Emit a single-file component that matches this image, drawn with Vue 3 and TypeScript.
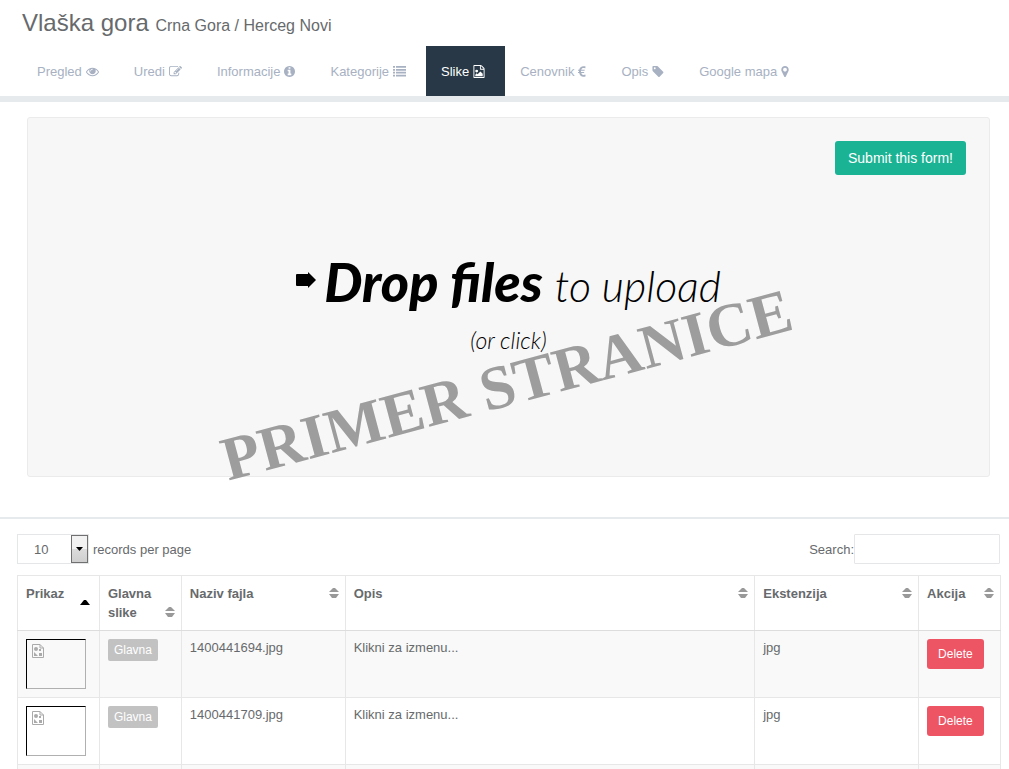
<script setup lang="ts">
import { ref } from 'vue'

interface Icon {
  box: string
  width: number
  path: string
}

interface Tab {
  label: string
  icon: Icon
}

interface Column {
  label: string
  units: number
  sort: 'asc' | 'both'
}

const tabs: Tab[] = [
  {
    label: 'Pregled',
    icon: {
      box: '0 0 1792 1792',
      width: 13,
      path: 'M1664 960q-152-236-381-353 61 104 61 225 0 185-131.500 316.500t-316.500 131.500-316.500-131.500-131.500-316.500q0-121 61-225-229 117-381 353 133 205 333.500 326.500t434.500 121.500 434.500-121.500 333.500-326.500zm-720-384q0-20-14-34t-34-14q-125 0-214.500 89.500t-89.500 214.500q0 20 14 34t34 14 34-14 14-34q0-86 61-147t147-61q20 0 34-14t14-34zm848 384q0 34-20 69-140 230-376.500 368.500t-499.500 138.500-499.500-139-376.500-368q-20-35-20-69t20-69q140-229 376.500-368t499.500-139 499.500 139 376.500 368q20 35 20 69z'
    }
  },
  {
    label: 'Uredi',
    icon: {
      box: '0 0 1792 1792',
      width: 13,
      path: 'M888 1184l116-116-152-152-116 116v56h96v96h56zm440-720q-16-16-33 1l-350 350q-17 17-1 33t33-1l350-350q17-17 1-33zm80 594v190q0 119-84.500 203.500t-203.500 84.500h-832q-119 0-203.500-84.500t-84.500-203.500v-832q0-119 84.500-203.500t203.500-84.500h832q63 0 117 25 15 7 18 23 3 17-9 29l-49 49q-14 14-32 8-23-6-45-6h-832q-66 0-113 47t-47 113v832q0 66 47 113t113 47h832q66 0 113-47t47-113v-126q0-13 9-22l64-64q15-15 35-7t20 29zm-96-738l288 288-672 672h-288v-288zm444 132l-92 92-288-288 92-92q28-28 68-28t68 28l152 152q28 28 28 68t-28 68z'
    }
  },
  {
    label: 'Informacije',
    icon: {
      box: '128 0 1536 1792',
      width: 11,
      path: 'M1152 1376v-160q0-14-9-23t-23-9h-96v-512q0-14-9-23t-23-9h-320q-14 0-23 9t-9 23v160q0 14 9 23t23 9h96v320h-96q-14 0-23 9t-9 23v160q0 14 9 23t23 9h448q14 0 23-9t9-23zm-128-896v-160q0-14-9-23t-23-9h-192q-14 0-23 9t-9 23v160q0 14 9 23t23 9h192q14 0 23-9t9-23zm640 416q0 209-103 385.500t-279.500 279.500-385.500 103-385.500-103-279.500-279.500-103-385.500 103-385.500 279.500-279.500 385.500-103 385.500 103 279.500 279.500 103 385.500z'
    }
  },
  {
    label: 'Kategorije',
    icon: {
      box: '0 0 13 13',
      width: 13,
      path: 'M0 1h2v1.800H0zM3 1h10v1.800H3zM0 3.900h2v1.800H0zM3 3.900h10v1.800H3zM0 6.800h2v1.800H0zM3 6.800h10v1.800H3zM0 9.700h2v1.800H0zM3 9.700h10v1.800H3z'
    }
  },
  {
    label: 'Slike',
    icon: {
      box: '128 0 1536 1792',
      width: 12,
      path: 'M1596 380q28 28 48 76t20 88v1152q0 40-28 68t-68 28h-1344q-40 0-68-28t-28-68v-1600q0-40 28-68t68-28h896q40 0 88 20t76 48zm-444-244v376h376q-10-29-22-41l-313-313q-12-12-41-22zm384 1528v-1024h-416q-40 0-68-28t-28-68v-416h-768v1536h1280zm-128-448v320h-1024v-192l192-192 128 128 384-384zm-832-192q-80 0-136-56t-56-136 56-136 136-56 136 56 56 136-56 136-136 56z'
    }
  },
  {
    label: 'Cenovnik',
    icon: {
      box: '0 0 8 13',
      width: 8,
      path: 'M7.600 1.600 7.200 3.500C6.700 3.200 6.100 3.100 5.500 3.100 4.400 3.100 3.600 3.700 3.300 4.700H6.800L6.500 5.800H3V6.900H6.300L6 8H3.300C3.600 9.200 4.400 9.900 5.600 9.900 6.200 9.900 6.800 9.800 7.300 9.500L7.700 11.300C7 11.700 6.200 11.800 5.400 11.800 3.200 11.800 1.600 10.400 1.200 8H0V6.900H1V5.800H0V4.700H1.200C1.700 2.600 3.200 1.200 5.400 1.200 6.200 1.200 6.900 1.300 7.600 1.600Z'
    }
  },
  {
    label: 'Opis',
    icon: {
      box: '128 0 1536 1792',
      width: 12,
      path: 'M576 448q0-53-37.500-90.500t-90.500-37.500-90.500 37.500-37.500 90.500 37.500 90.500 90.500 37.500 90.500-37.500 37.500-90.500zm1067 576q0 53-37 90l-491 492q-39 37-91 37-53 0-90-37l-715-716q-38-37-64.500-101t-26.500-117v-416q0-52 38-90t90-38h416q53 0 117 26.500t102 64.500l715 714q37 39 37 91z'
    }
  },
  {
    label: 'Google mapa',
    icon: {
      box: '384 0 1024 1792',
      width: 8,
      path: 'M1152 640q0-106-75-181t-181-75-181 75-75 181 75 181 181 75 181-75 75-181zm256 0q0 109-33 179l-364 774q-16 33-47.500 52t-67.500 19-67.500-19-46.500-52l-365-774q-33-70-33-179 0-212 150-362t362-150 362 150 150 362z'
    }
  }
]

const columns: Column[] = [
  { label: 'Prikaz', units: 1, sort: 'asc' },
  { label: 'Glavna slike', units: 1, sort: 'both' },
  { label: 'Naziv fajla', units: 2, sort: 'both' },
  { label: 'Opis', units: 5, sort: 'both' },
  { label: 'Ekstenzija', units: 2, sort: 'both' },
  { label: 'Akcija', units: 1, sort: 'both' }
]

const files = [
  { name: '1400441694.jpg', ext: 'jpg' },
  { name: '1400441709.jpg', ext: 'jpg' }
]

const activeTab = ref('Slike')
const pageSize = ref('10')
const search = ref('')
</script>

<template>
  <div class="page">
    <header class="heading">
      <h1>Vlaška gora <small>Crna Gora / Herceg Novi</small></h1>
    </header>

    <nav class="tabs">
      <a
        v-for="tab in tabs"
        :key="tab.label"
        href="#"
        class="tab"
        :class="{ active: tab.label === activeTab }"
        @click.prevent="activeTab = tab.label"
      >
        <span>{{ tab.label }}</span>
        <svg :viewBox="tab.icon.box" :width="tab.icon.width" height="13" fill="currentColor" aria-hidden="true">
          <path :d="tab.icon.path" />
        </svg>
      </a>
    </nav>

    <section class="upload">
      <form class="dropzone" @submit.prevent>
        <button type="submit" class="submit">Submit this form!</button>
        <div class="message">
          <p class="drop-line">
            <svg class="arrow" viewBox="0 0 20 16" width="20" height="16" aria-hidden="true">
              <path d="M1 2h11V0l8 8-8 8v-2H1q-1 0-1-1V3q0-1 1-1z" />
            </svg>
            <strong>Drop files</strong>
            <span class="thin">to upload</span>
          </p>
          <p class="click-line">(or click)</p>
        </div>
        <div class="watermark">PRIMER STRANICE</div>
      </form>
    </section>

    <section class="listing">
      <div class="controls">
        <label class="length">
          <span class="select-box">
            <select v-model="pageSize">
              <option>10</option>
            </select>
            <span class="select-arrow">
              <svg viewBox="0 0 7 4" width="7" height="4" aria-hidden="true"><path d="M0 0h7L3.500 4z" /></svg>
            </span>
          </span>
          records per page
        </label>
        <label class="search">Search:<input v-model="search" type="text" /></label>
      </div>

      <table>
        <colgroup>
          <col v-for="c in columns" :key="c.label" :style="{ width: (c.units / 12) * 100 + '%' }" />
        </colgroup>
        <thead>
          <tr>
            <th v-for="c in columns" :key="c.label" scope="col">
              <div class="th" :class="c.sort">
                <span>{{ c.label }}</span>
                <svg v-if="c.sort === 'both'" viewBox="0 0 10 10" width="10" height="10" fill="#999" aria-hidden="true">
                  <path d="M0 4 4 0H6L10 4zM0 6H10L7 10H3z" />
                </svg>
                <svg v-else viewBox="0 0 10 5" width="10" height="5" aria-hidden="true">
                  <path d="M0 5 4 0H6L10 5z" />
                </svg>
              </div>
            </th>
          </tr>
        </thead>
        <tbody>
          <tr v-for="f in files" :key="f.name">
            <td>
              <div class="thumb">
                <svg viewBox="0 0 12 14" width="12" height="14" aria-hidden="true">
                  <path d="M.5.5h7.500l3.500 3.500v9.500H.5zM8 .5V4h3.500" fill="none" stroke="#aaa" />
                  <circle cx="4" cy="5" r="2" fill="#aaa" />
                  <path d="M7 5h2v2H7zM2 8l4 4H2zM7 9h3v3H7z" fill="#aaa" />
                </svg>
              </div>
            </td>
            <td><span class="badge">Glavna</span></td>
            <td>{{ f.name }}</td>
            <td>Klikni za izmenu...</td>
            <td>{{ f.ext }}</td>
            <td><button type="button" class="delete">Delete</button></td>
          </tr>
          <tr class="upcoming">
            <td v-for="c in columns" :key="c.label"></td>
          </tr>
        </tbody>
      </table>
    </section>
  </div>
</template>

<style>
body {
  margin: 0;
  background: #fff;
}
</style>

<style scoped>
.page {
  box-sizing: border-box;
  height: 100vh;
  overflow: hidden;
  font-family: 'Liberation Sans', Arial, sans-serif;
  font-size: 13px;
  line-height: 19px;
  color: #676a6c;
}
.heading {
  padding: 8px 22px;
}
h1 {
  margin: 0;
  font-size: 24px;
  font-weight: 400;
  line-height: 30px;
}
h1 small {
  font-size: 16px;
  line-height: 16px;
}
.tabs {
  display: flex;
  padding-left: 22px;
  border-bottom: 6px solid #e7eaec;
}
.tab {
  display: flex;
  align-items: center;
  gap: 4px;
  height: 50px;
  padding: 0 20px 0 15px;
  color: #a7b1c2;
  text-decoration: none;
}
.tab.active {
  background: #293846;
  color: #fff;
}
.upload {
  padding: 15px 19px 40px 27px;
  border-bottom: 2px solid #e7eaec;
}
.dropzone {
  position: relative;
  box-sizing: border-box;
  min-height: 360px;
  padding: 23px;
  border: 1px solid #ebebeb;
  border-radius: 3px;
  background: #f7f7f7;
}
.submit {
  display: block;
  margin-left: auto;
  height: 34px;
  padding: 0 13px;
  border: 0;
  border-radius: 3px;
  background: #1ab394;
  color: #fff;
  font: 14px 'Liberation Sans', Arial, sans-serif;
}
.message {
  padding-top: 71px;
  color: #000;
  font-family: Lato, 'Open Sans', sans-serif;
  font-style: italic;
  text-align: center;
}
.message p {
  margin: 0;
}
.drop-line {
  display: flex;
  justify-content: center;
  align-items: baseline;
  line-height: 72px;
}
.arrow {
  align-self: center;
  margin: 0 8px 8px 0;
}
.drop-line strong {
  margin-right: 12px;
  font-size: 54px;
  font-weight: 900;
}
.thin {
  font-size: 43px;
  font-weight: 300;
}
.click-line {
  padding-top: 4px;
  font-size: 23px;
  font-weight: 300;
  line-height: 28px;
}
.watermark {
  position: absolute;
  top: 231px;
  left: 0;
  right: 0;
  padding-right: 4px;
  color: #9d9d9d;
  font: bold 62px/70px 'Liberation Serif', 'Times New Roman', serif;
  text-align: center;
  white-space: nowrap;
  transform: rotate(-15deg);
  pointer-events: none;
}
.listing {
  padding: 15px 8px 0 17px;
}
.controls {
  display: flex;
  justify-content: space-between;
  align-items: center;
  padding-right: 1px;
  margin-bottom: 11px;
}
.length,
.search {
  display: flex;
  align-items: center;
}
.length {
  gap: 4px;
}
.select-box {
  position: relative;
  display: block;
}
select {
  appearance: none;
  box-sizing: border-box;
  display: block;
  width: 72px;
  height: 30px;
  padding: 0 18px 0 16px;
  border: 1px solid #e5e6e7;
  border-radius: 0;
  background: #fff;
  color: #676a6c;
  font: 13px 'Liberation Sans', Arial, sans-serif;
}
.select-arrow {
  position: absolute;
  top: 1px;
  right: 1px;
  bottom: 1px;
  box-sizing: border-box;
  width: 17px;
  display: flex;
  justify-content: center;
  align-items: center;
  border: 1px solid #707070;
  background: linear-gradient(#f2f2f2 50%, #dcdcdc 50%, #cfcfcf);
  pointer-events: none;
}
.search input {
  box-sizing: border-box;
  width: 146px;
  height: 30px;
  padding: 0 8px;
  border: 1px solid #e5e6e7;
  border-radius: 1px;
  background: #fff;
  color: inherit;
  font: inherit;
}
table {
  width: 100%;
  table-layout: fixed;
  border-collapse: collapse;
}
th,
td {
  padding: 8px;
  border: 1px solid #e7e7e7;
  text-align: left;
  vertical-align: top;
}
th {
  border-bottom-color: #ddd;
}
.th {
  display: flex;
  justify-content: space-between;
  align-items: flex-end;
}
.th svg {
  flex: none;
  margin: 0 -2px 5px 0;
}
.th.asc svg {
  margin: 0 1px -2px 0;
}
tbody tr:nth-child(odd) {
  background: #f9f9f9;
}
td {
  height: 50px;
  line-height: 17px;
}
.thumb {
  box-sizing: border-box;
  width: 60px;
  height: 50px;
  padding: 4px 5px;
  border: 1px solid #b0b0b0;
  border-top-color: #000;
  border-left-color: #000;
}
.thumb svg {
  display: block;
}
.badge {
  display: inline-block;
  padding: 2px 6px 1px;
  border-radius: 2px;
  background: #c2c2c2;
  color: #fff;
  font-size: 12px;
  line-height: 19px;
}
.delete {
  display: block;
  height: 30px;
  padding: 0 11px;
  border: 0;
  border-radius: 3px;
  background: #ed5565;
  color: #fff;
  font: 12px 'Liberation Sans', Arial, sans-serif;
}
</style>
